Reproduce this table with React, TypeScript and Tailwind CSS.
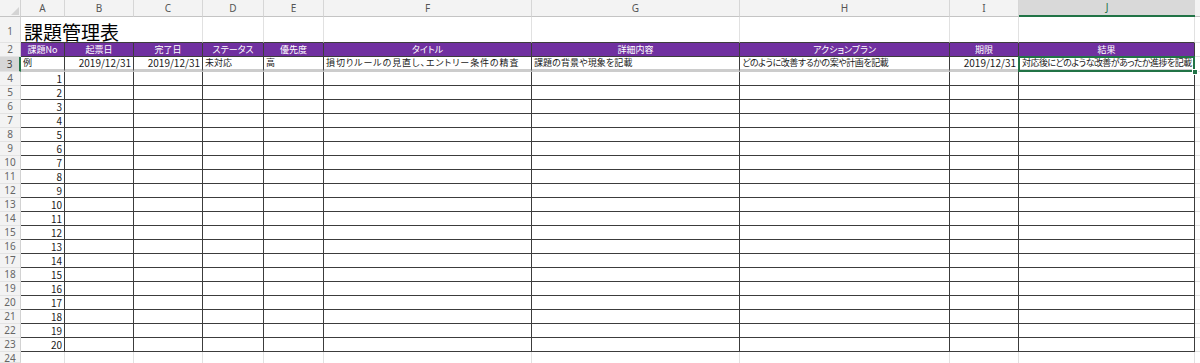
import React from "react";

const COLS = ["A", "B", "C", "D", "E", "F", "G", "H", "I", "J"];
const HEADERS = [
  "課題No",
  "起票日",
  "完了日",
  "ステータス",
  "優先度",
  "タイトル",
  "詳細内容",
  "アクションプラン",
  "期限",
  "結果",
];
const EXAMPLE: { t: string; right?: boolean; track?: string }[] = [
  { t: "例" },
  { t: "2019/12/31", right: true },
  { t: "2019/12/31", right: true },
  { t: "未対応" },
  { t: "高" },
  { t: "損切りルールの見直し、エントリー条件の精査", track: "tracking-[0.9px]" },
  { t: "課題の背景や現象を記載", track: "tracking-[0.1px]" },
  { t: "どのように改善するかの案や計画を記載", track: "tracking-[-0.45px]" },
  { t: "2019/12/31", right: true },
  { t: "対応後にどのような改善があったか進捗を記載", track: "tracking-[-0.55px]" },
];

const rowHead =
  "bg-[#f3f3f3] border-r border-b border-r-[#d2d2d2] border-b-[#e3e3e3] flex justify-center text-[10px] text-[#666] font-['Noto_Sans',sans-serif]";

export default function App() {
  const nums = Array.from({ length: 20 }, (_, i) => i + 1);
  return (
    <div className="w-[1200px] h-[363px] overflow-hidden bg-white text-[#1a1a1a] font-['Noto_Sans_CJK_JP',sans-serif]">
      <div className="grid grid-cols-[21px_44px_69px_69px_61px_60px_208px_208px_210px_69px_176px_5px]">
        {/* column header row */}
        <div className="h-[17px] bg-[#f3f3f3] border-r border-b border-r-[#d2d2d2] border-b-[#c4c4c4] flex items-end justify-end pr-[1px] pb-[1px]">
          <svg width="8" height="8" viewBox="0 0 8 8">
            <polygon points="8,0 8,8 0,8" fill="#d4d4d4" />
          </svg>
        </div>
        {COLS.map((c) =>
          c === "J" ? (
            <div
              key={c}
              className="h-[17px] bg-[#d9d9d9] border-b-2 border-b-[#217346] flex items-center justify-center text-[10px] text-[#217346] font-['Noto_Sans',sans-serif]"
            >
              {c}
            </div>
          ) : (
            <div
              key={c}
              className="h-[17px] bg-[#f3f3f3] border-r border-b border-r-[#d6d6d6] border-b-[#c4c4c4] flex items-center justify-center text-[10px] text-[#555] font-['Noto_Sans',sans-serif]"
            >
              {c}
            </div>
          )
        )}
        <div className="h-[17px] bg-[#f3f3f3] border-b border-b-[#c4c4c4]" />

        {/* row 1 */}
        <div className={`${rowHead} h-[26px] items-end pb-[3px]`}>1</div>
        <div className="col-span-3 h-[26px] border-r border-b border-r-[#e1e1e1] border-b-[#3c3c3c] flex items-end pl-[3px] text-[19px] leading-none pb-[1px] text-black">
          課題管理表
        </div>
        {["D", "E", "F", "G", "H", "I", "J"].map((c) => (
          <div
            key={c}
            className="h-[26px] border-r border-b border-r-[#e1e1e1] border-b-[#3c3c3c]"
          />
        ))}
        <div className="h-[26px] border-b border-b-[#e1e1e1]" />

        {/* row 2 purple header */}
        <div className={`${rowHead} h-[14px] items-center leading-[13px]`}>2</div>
        {HEADERS.map((h) => (
          <div
            key={h}
            className="h-[14px] bg-[#7030a0] border-r border-b border-[#3c3c3c] flex items-center justify-center text-[9px] leading-[13px] text-white [font-feature-settings:'palt'] whitespace-nowrap overflow-hidden"
          >
            {h}
          </div>
        ))}
        <div className="h-[14px] border-b border-b-[#e1e1e1]" />

        {/* row 3 example */}
        <div className="h-[15px] bg-[#d6d6d6] border-r-2 border-b border-r-[#217346] border-b-[#e3e3e3] flex justify-center items-center text-[10px] text-[#444] font-['Noto_Sans',sans-serif] leading-[14px]">
          3
        </div>
        {EXAMPLE.map((e, i) => (
          <div
            key={i}
            className={
              (i === 9
                ? "relative h-[15px] border-r border-b-[3px] border-r-[#3c3c3c] border-b-[#cccccc] flex items-center pl-[3px] text-[9px] leading-[12px] whitespace-nowrap [font-feature-settings:'palt'] "
                : e.right
                ? "h-[15px] border-r border-b-[3px] border-r-[#3c3c3c] border-b-[#cccccc] flex items-center justify-end pr-[2px] text-[10px] leading-[12px] whitespace-nowrap "
                : "h-[15px] border-r border-b-[3px] border-r-[#3c3c3c] border-b-[#cccccc] flex items-center pl-[2px] text-[9px] leading-[12px] whitespace-nowrap overflow-hidden [font-feature-settings:'palt'] ") +
              (e.track ?? "")
            }
          >
            {e.t}
            {i === 9 && (
              <>
                <div className="absolute -left-px -top-px -right-px -bottom-[3px] border-2 border-[#217346] pointer-events-none" />
                <div className="absolute -right-[4px] -bottom-[6px] w-[6px] h-[6px] bg-[#217346] border border-white" />
              </>
            )}
          </div>
        ))}
        <div className="h-[15px] border-b border-b-[#e1e1e1]" />

        {/* rows 4-23 */}
        {nums.map((n) => (
          <React.Fragment key={n}>
            <div className={`${rowHead} h-[14px] items-center leading-[13px]`}>
              {n + 3}
            </div>
            <div className="h-[14px] border-r border-b border-[#3c3c3c] flex items-center justify-end pr-[2px] text-[10px] leading-[13px]">
              {n}
            </div>
            {["B", "C", "D", "E", "F", "G", "H", "I", "J"].map((c) => (
              <div
                key={c}
                className="h-[14px] border-r border-b border-[#3c3c3c]"
              />
            ))}
            <div className="h-[14px] border-b border-b-[#e1e1e1]" />
          </React.Fragment>
        ))}

        {/* row 24 */}
        <div className={`${rowHead} h-[11px] items-start leading-[12px]`}>24</div>
        {COLS.map((c) => (
          <div key={c} className="h-[11px] border-r border-r-[#e1e1e1]" />
        ))}
        <div className="h-[11px]" />
      </div>
    </div>
  );
}
